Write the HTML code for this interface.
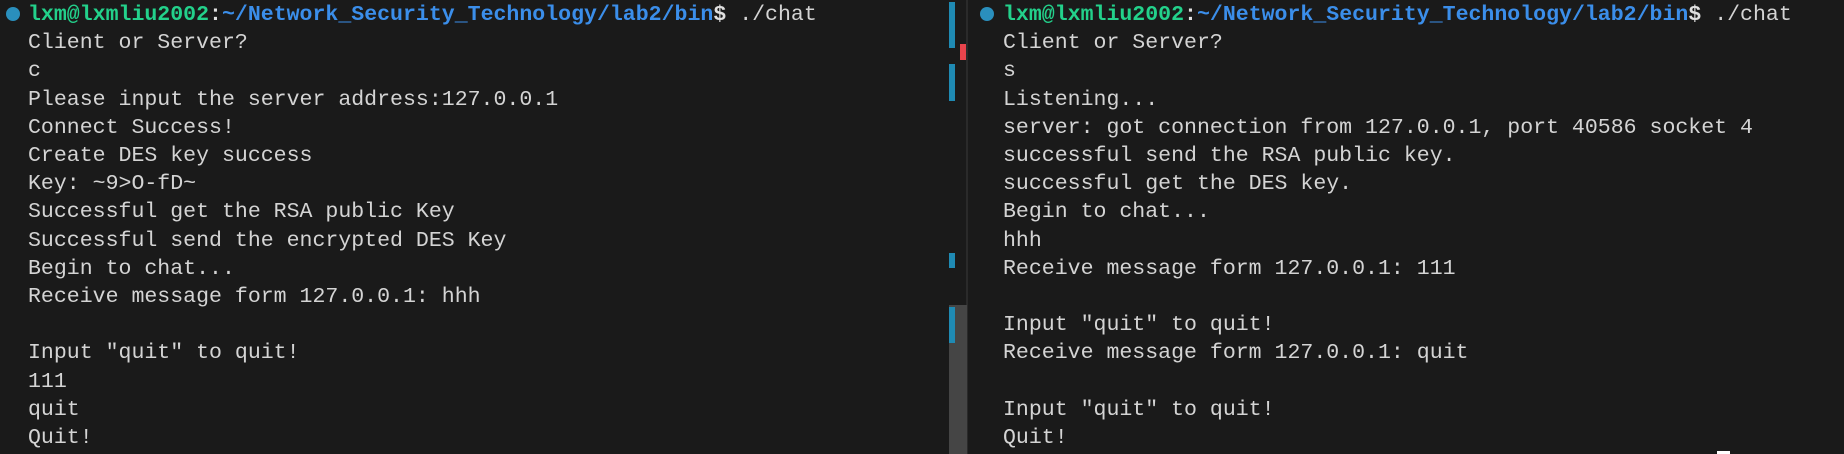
<!DOCTYPE html>
<html><head><meta charset="utf-8"><style>
html,body{margin:0;padding:0;background:#1a1a1a;width:1844px;height:454px;overflow:hidden;}
.t{position:absolute;top:0;font-family:"Liberation Mono",monospace;font-size:21.55px;line-height:28.2px;color:#d4d4d4;white-space:pre;}
.g{color:#23d18b;font-weight:bold}.b{color:#3b8eea;font-weight:bold}.w{font-weight:bold;color:#e0e0e0}
.dot{position:absolute;width:14px;height:14px;border-radius:50%;background:#2a8fbd;top:7px}
.bar{position:absolute;background:#1f8ab3;}
</style></head><body>
<div class="dot" style="left:6px"></div>
<div class="dot" style="left:980px"></div>
<div class="t" style="left:28px;top:1px"><span class="g">lxm@lxmliu2002</span><span class="w">:</span><span class="b">~/Network_Security_Technology/lab2/bin</span><span class="w">$</span> ./chat
Client or Server?
c
Please input the server address:127.0.0.1
Connect Success!
Create DES key success
Key: ~9>O-fD~
Successful get the RSA public Key
Successful send the encrypted DES Key
Begin to chat...
Receive message form 127.0.0.1: hhh

Input "quit" to quit!
111
quit
Quit!</div>
<div class="t" style="left:1003px;top:1px"><span class="g">lxm@lxmliu2002</span><span class="w">:</span><span class="b">~/Network_Security_Technology/lab2/bin</span><span class="w">$</span> ./chat
Client or Server?
s
Listening...
server: got connection from 127.0.0.1, port 40586 socket 4
successful send the RSA public key.
successful get the DES key.
Begin to chat...
hhh
Receive message form 127.0.0.1: 111

Input "quit" to quit!
Receive message form 127.0.0.1: quit

Input "quit" to quit!
Quit!</div>
<div style="position:absolute;left:966px;top:0;width:2px;height:454px;background:#2a2a2a"></div>
<div style="position:absolute;left:949px;top:305px;width:18px;height:149px;background:#454545"></div>
<div class="bar" style="left:949px;top:2px;width:6px;height:46px"></div>
<div class="bar" style="left:949px;top:64px;width:6px;height:37px"></div>
<div class="bar" style="left:949px;top:253px;width:6px;height:15px"></div>
<div class="bar" style="left:949px;top:307px;width:6px;height:36px"></div>
<div style="position:absolute;left:960px;top:44px;width:6px;height:16px;background:#e8444c"></div>
<div style="position:absolute;left:1717px;top:451px;width:13px;height:3px;background:#fff"></div>
</body></html>
